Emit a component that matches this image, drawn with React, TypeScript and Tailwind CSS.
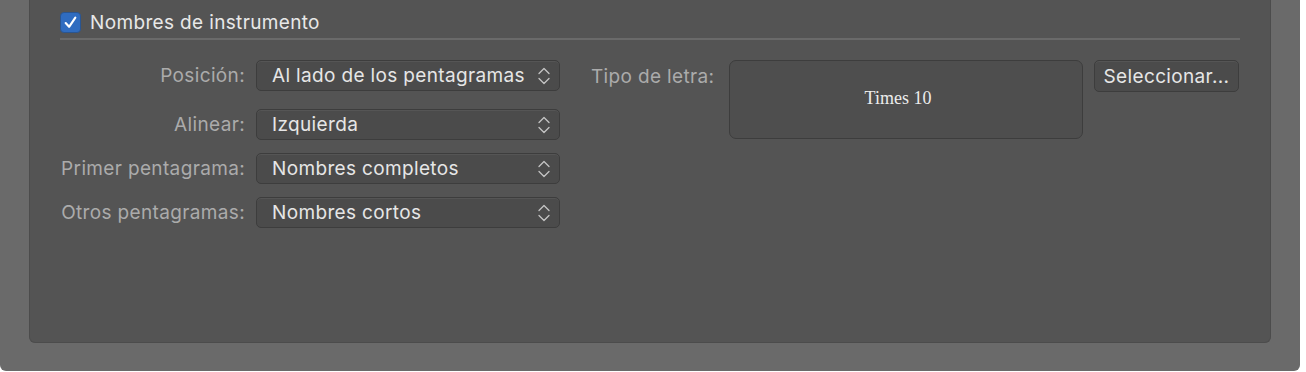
import React from "react";

const FONT = { fontFamily: "Inter, 'Noto Sans', sans-serif" };

function Chevrons() {
  return (
    <svg width="14" height="20" viewBox="0 0 14 20" fill="none" className="shrink-0">
      <path d="M2 7.5 L7 2.5 L12 7.5" stroke="#c4c4c4" strokeWidth="1.3" strokeLinecap="round" strokeLinejoin="round" />
      <path d="M2 12.5 L7 17.5 L12 12.5" stroke="#c4c4c4" strokeWidth="1.3" strokeLinecap="round" strokeLinejoin="round" />
    </svg>
  );
}

function Select({ value }: { value: string }) {
  return (
    <div className="flex h-[31px] w-[304px] items-center justify-between rounded-[5px] border border-[#3d3d3d] bg-[#4b4b4b] pl-[15px] pr-[8px] shadow-[inset_0_1px_0_rgba(255,255,255,0.06)]">
      <span className="text-[19px] leading-none tracking-[0.35px] text-[#e6e6e6]">{value}</span>
      <Chevrons />
    </div>
  );
}

const ROWS = [
  { label: "Posición:", value: "Al lado de los pentagramas" },
  { label: "Alinear:", value: "Izquierda" },
  { label: "Primer pentagrama:", value: "Nombres completos" },
  { label: "Otros pentagramas:", value: "Nombres cortos" },
];

export default function App() {
  return (
    <div className="h-[372px] w-[1306px] bg-white" style={FONT}>
      <div className="h-[371px] w-[1300px] rounded-b-[6px] bg-[#6a6a6a] pl-[29px]">
        <div className="h-[343px] w-[1242px] rounded-b-[6px] border-x border-b border-[#4c4c4c] bg-[#545454] pl-[30px] pr-[30px]">
          {/* Header */}
          <div className="flex items-center gap-[9px] pt-[12px]">
            <div className="flex h-[21px] w-[21px] items-center justify-center rounded-[4px] border border-[#2a5590] bg-[#2f6cc0]">
              <svg width="15" height="15" viewBox="0 0 14 14" fill="none">
                <path d="M2.5 7.5 L5.7 11 L11.5 2.5" stroke="white" strokeWidth="2" strokeLinecap="round" strokeLinejoin="round" />
              </svg>
            </div>
            <span className="text-[19px] leading-[21px] tracking-[0.35px] text-[#e8e8e8]">Nombres de instrumento</span>
          </div>
          <div className="mt-[5px] h-[2px] bg-[#6a6a6a]" />

          {/* Form */}
          <div className="mt-[20px] flex">
            <div className="flex flex-col">
              {ROWS.map((row, i) => (
                <div key={row.label} className={`flex items-center gap-[11px] ${i === 0 ? "" : i === 1 ? "mt-[18px]" : "mt-[13px]"}`}>
                  <span className="w-[185px] whitespace-nowrap text-right text-[19px] leading-none tracking-[0.35px] text-[#ababab]">{row.label}</span>
                  <Select value={row.value} />
                </div>
              ))}
            </div>

            <div className="ml-[31px] flex items-start">
              <span className="w-[120px] whitespace-nowrap pt-[6px] text-[19px] leading-[21px] tracking-[0.35px] text-[#ababab]">Tipo de letra:</span>
              <div className="ml-[18px] flex h-[79px] w-[354px] items-center justify-center rounded-[7px] border border-[#3d3d3d] bg-[#4e4e4e] pb-[3px] pr-[16px]">
                <span className="text-[18px] text-[#ececec]" style={{ fontFamily: "'Liberation Serif', serif" }}>Times 10</span>
              </div>
              <button className="ml-[11px] h-[32px] w-[145px] rounded-[5px] border border-[#3d3d3d] bg-[#4b4b4b] text-[19px] leading-none tracking-[0.35px] text-[#e6e6e6] shadow-[inset_0_1px_0_rgba(255,255,255,0.06)]">
                Seleccionar...
              </button>
            </div>
          </div>
        </div>
      </div>
    </div>
  );
}
